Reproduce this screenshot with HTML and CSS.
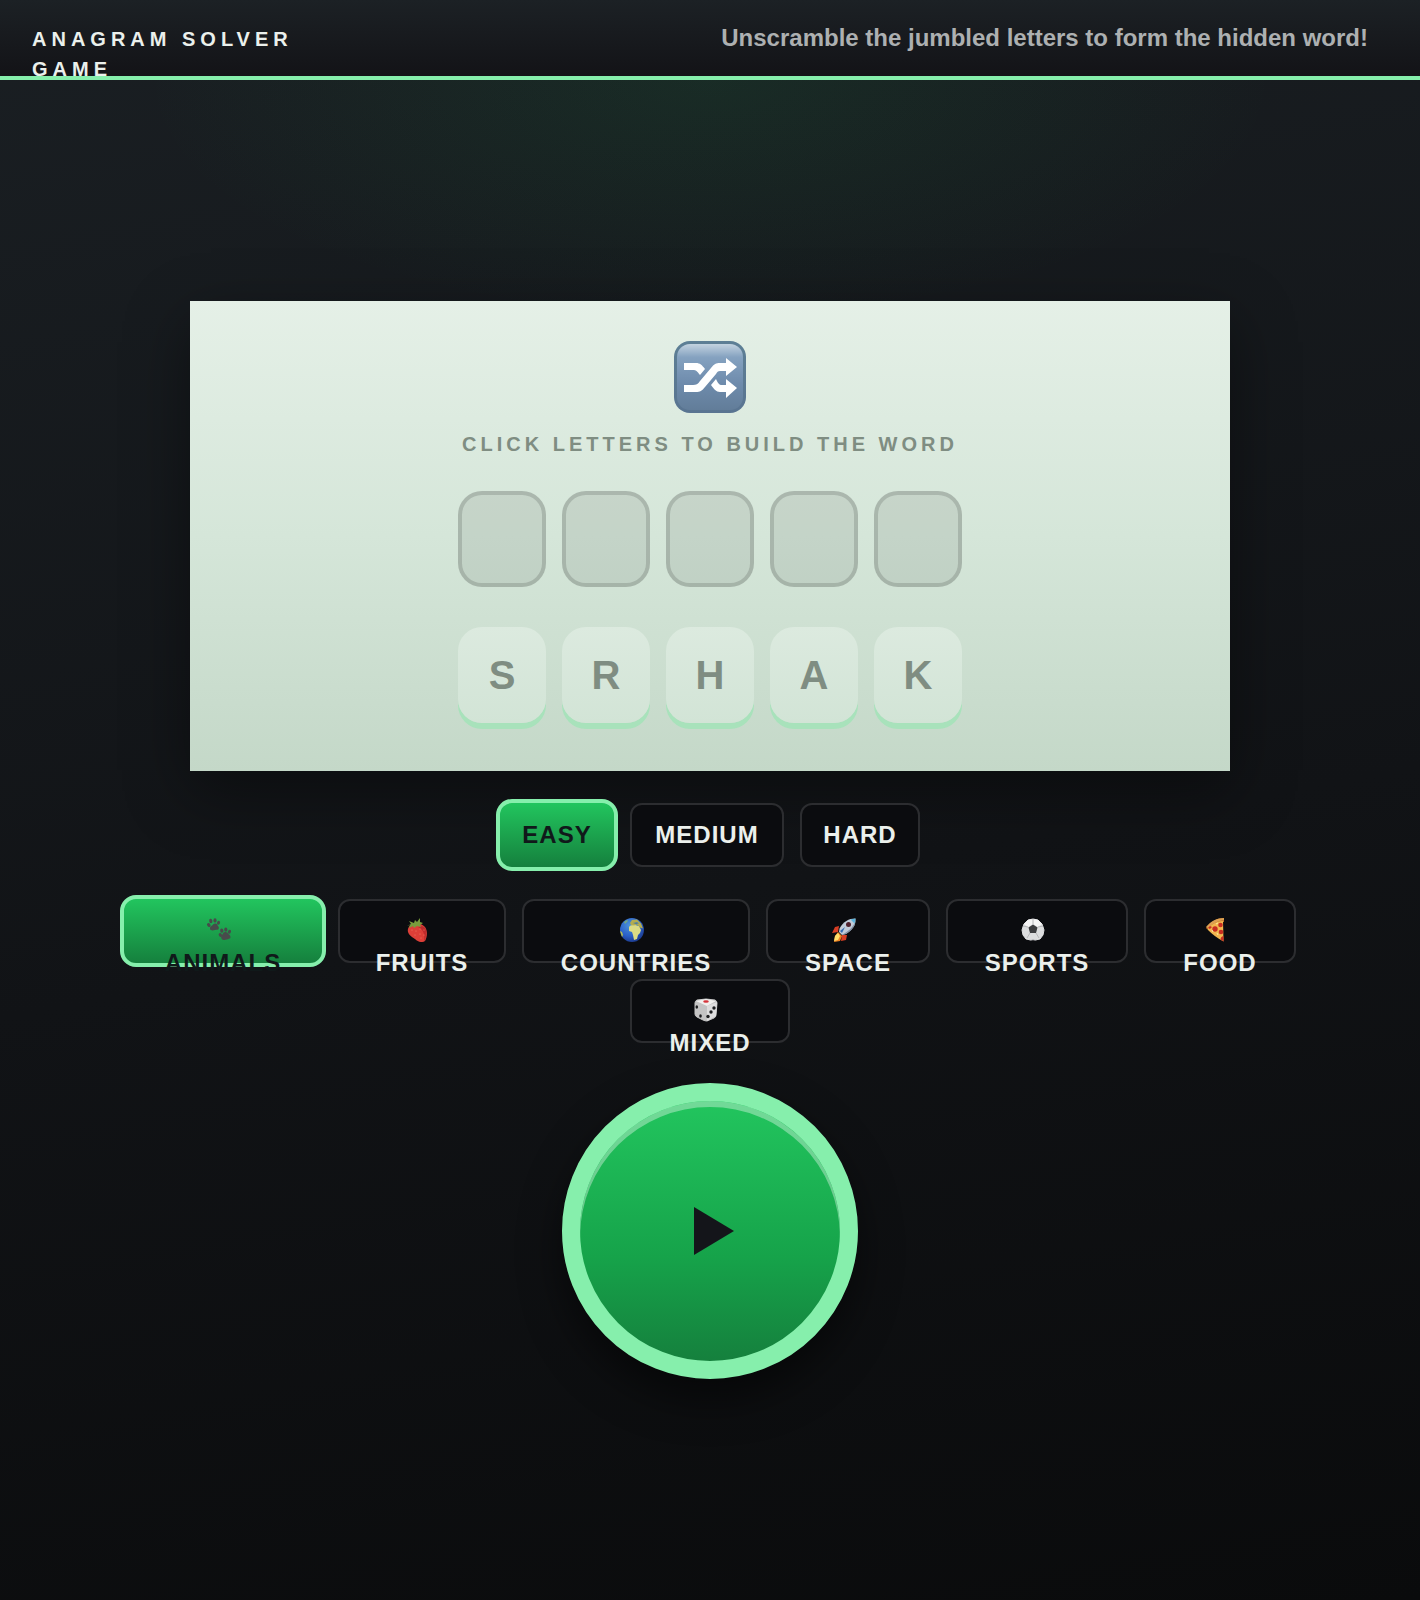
FILE: index.html
```html
<!DOCTYPE html>
<html lang="en">
<head>
    <meta charset="UTF-8">
    <meta name="viewport" content="width=device-width, initial-scale=1.0">
    <title>Anagram Solver Game</title>
    <link rel="stylesheet" href="styles.css">
</head>
<body>
    <header class="topbar">
        <h1 class="title">Anagram Solver Game</h1>
        <p class="tagline">Unscramble the jumbled letters to form the hidden word!</p>
    </header>

    <main class="game">
        <section class="board">
            <svg class="board-icon" viewBox="0 0 72 72" aria-hidden="true">
                <defs>
                    <linearGradient id="shuffle-edge" x1="0" y1="0" x2="0" y2="1">
                        <stop offset="0" stop-color="#5d7f95"/>
                        <stop offset="1" stop-color="#597491"/>
                    </linearGradient>
                    <linearGradient id="shuffle-bg" x1="0" y1="0" x2="0" y2="1">
                        <stop offset="0" stop-color="#c3d3e0"/>
                        <stop offset="0.2" stop-color="#85a2c0"/>
                        <stop offset="0.6" stop-color="#6e8bac"/>
                        <stop offset="1" stop-color="#627d99"/>
                    </linearGradient>
                </defs>
                <rect width="72" height="72" rx="16" fill="url(#shuffle-edge)"/>
                <rect x="3" y="3" width="66" height="66" rx="13" fill="url(#shuffle-bg)"/>
                <path d="M10 22h12c4 0 6 2 9 6l-5 6c-3-4-4-5-7-5h-9z" fill="#fff"/>
                <path d="M10 44h9c3 0 5-1 7-4l11-13c3-4 5-5 9-5h6v-5l11 9-11 9v-5h-6c-2 0-3 1-4 3L31 46c-3 4-5 5-9 5H10z" fill="#fff"/>
                <path d="M37 44l5-6c2 4 3 6 6 6h4v-6l11 9-11 10v-6h-6c-4 0-6-3-9-7z" fill="#fff"/>
            </svg>
            <p class="hint">Click letters to build the word</p>
            <div class="slots">
                <span class="slot"></span>
                <span class="slot"></span>
                <span class="slot"></span>
                <span class="slot"></span>
                <span class="slot"></span>
            </div>
            <div class="tiles">
                <button type="button" class="tile">S</button>
                <button type="button" class="tile">R</button>
                <button type="button" class="tile">H</button>
                <button type="button" class="tile">A</button>
                <button type="button" class="tile">K</button>
            </div>
        </section>

        <div class="options">
            <button type="button" class="option easy active">Easy</button>
            <button type="button" class="option medium">Medium</button>
            <button type="button" class="option hard">Hard</button>
        </div>

        <div class="options">
            <button type="button" class="option animals active">
                <svg class="emoji" viewBox="0 0 24 24" aria-hidden="true">
                    <g fill="#484b4b">
                        <path d="M3 10.500c0-2.500 2-2.500 3-4s4-1.500 4.500.5c.3 1.500 1.800 1.500 1.300 3.500-.5 1.700-2.300 1-3.800 1.500S3 13 3 10.500z"/>
                        <ellipse cx="1.800" cy="7" rx="1.600" ry="2.100" transform="rotate(-30 1.800 7)"/>
                        <ellipse cx="3.800" cy="3" rx="1.600" ry="2.200" transform="rotate(-12 3.800 3)"/>
                        <ellipse cx="8" cy="2.400" rx="1.600" ry="2.200"/>
                        <ellipse cx="11.500" cy="4.800" rx="1.500" ry="2" transform="rotate(25 11.500 4.800)"/>
                        <path d="M14.500 20.500c-1-2.500 1-3.500 1.500-5s3.500-2 4.500-.5 3 2 3 4-2.500 2-4 2.600-4 1-5-1.100z"/>
                        <ellipse cx="13.400" cy="17" rx="1.600" ry="2.100" transform="rotate(-30 13.400 17)"/>
                        <ellipse cx="14.800" cy="12.600" rx="1.600" ry="2.200" transform="rotate(-10 14.800 12.600)"/>
                        <ellipse cx="18.800" cy="11.600" rx="1.600" ry="2.200"/>
                        <ellipse cx="22.400" cy="13.800" rx="1.500" ry="2" transform="rotate(25 22.400 13.800)"/>
                    </g>
                </svg>
                <span>Animals</span>
            </button>
            <button type="button" class="option fruits">
                <svg class="emoji" viewBox="0 0 24 24" aria-hidden="true">
                    <path d="M2 11c1-6 12-8 17-2 3 4 2 11 0 14-3 2-7 1-10-2-5-3-8-6-7-10z" fill="#dc3f38"/>
                    <path d="M12 9c4-2 8 0 8 4s0 9-2 10c1-6 0-11-6-14z" fill="#bf2b2c"/>
                    <g fill="#f08a6c">
                        <circle cx="6" cy="12" r=".5"/><circle cx="10" cy="13" r=".5"/><circle cx="14" cy="11" r=".5"/><circle cx="18" cy="12" r=".5"/>
                        <circle cx="9" cy="17" r=".5"/><circle cx="14" cy="16" r=".5"/><circle cx="18" cy="17" r=".5"/><circle cx="15" cy="20" r=".5"/>
                    </g>
                    <path d="M1 8l4-2-2-3 5 2 1-3 2 2 3-4v4l3 1-3 2 1 2-4-1-3 2-1-2-4 2 1-3z" fill="#789c3c"/>
                </svg>
                <span>Fruits</span>
            </button>
            <button type="button" class="option countries">
                <svg class="emoji" viewBox="0 0 24 24" aria-hidden="true">
                    <defs>
                        <radialGradient id="ocean" cx=".4" cy=".3" r=".75">
                            <stop offset="0" stop-color="#4c93d8"/>
                            <stop offset="0.6" stop-color="#2a5fc9"/>
                            <stop offset="1" stop-color="#1a3685"/>
                        </radialGradient>
                    </defs>
                    <circle cx="12" cy="12" r="12" fill="url(#ocean)"/>
                    <path d="M9 9c1-2 4-2 6-2l4 1 2 4-1 3-2 2-1 4-3 1-1-5-1-3-3-1z" fill="#dbdc84"/>
                    <path d="M10 5l2-3 5-.5 4 4 2 5-3-1-3-3-3 1-3-.5z" fill="#b3ad50"/>
                    <path d="M4 4l3-2 1 1-3 3z" fill="#75a981"/>
                    <path d="M0 13l2 1 1 3-1 2z" fill="#b6bd4e"/>
                    <path d="M13 5l4-.8 2 1-3 .8z" fill="#3f79aa"/>
                </svg>
                <span>Countries</span>
            </button>
            <button type="button" class="option space">
                <svg class="emoji" viewBox="0 0 24 24" aria-hidden="true">
                    <path d="M7 8l-4 1-3 6 6-1zM15 17l-1 5-5 1 1-6z" fill="#d73e24"/>
                    <path d="M6 14l4 4-2 5-6 1 1-6z" fill="#f08223"/>
                    <path d="M6 15l2 3-2 4-4 1 1-5z" fill="#ffdf68"/>
                    <path d="M23.500.5c-7 0-12 3-16 10L7 14l3 3 4-1c6-4 10-8 9.500-15.500z" fill="#c0cbd8"/>
                    <path d="M23.500.5c0 7-6 12-13.500 16.500L14 16c6-4 10-8 9.500-15.500z" fill="#8290a3"/>
                    <path d="M23.500.5l-5 1 4 4z" fill="#5cb6de"/>
                    <circle cx="16.500" cy="6.500" r="2.500" fill="#50212d"/>
                    <path d="M8 13l5-4-3 6z" fill="#346bb1"/>
                </svg>
                <span>Space</span>
            </button>
            <button type="button" class="option sports">
                <svg class="emoji" viewBox="0 0 24 24" aria-hidden="true">
                    <circle cx="12" cy="12" r="11" fill="#3e3f42"/>
                    <path d="M7 2l5-1 5 1 4 4 2 6-1 5-3 4-5 1-2-1-2 1-5-1-3-4-1-5 2-6z" fill="#dcddde" stroke="#dcddde" stroke-linejoin="round"/>
                    <path d="M7 2l5-1 5 1 4 4-4 3-5-3-5 3-4-3z" fill="#f5f5f5"/>
                    <path d="M12 6.500l4.500 3-1.500 5.500H9L7.500 9.500z" fill="#3c3d3f"/>
                    <path d="M12 6V1M17 9l5-1M15 15l3 5M9 15l-3 5M7 9L2 8" stroke="#b7b8ba"/>
                </svg>
                <span>Sports</span>
            </button>
            <button type="button" class="option food">
                <svg class="emoji" viewBox="0 0 24 24" aria-hidden="true">
                    <path d="M2 10C6 4 13 0 20 0v4C13 4 8 7 4 12z" fill="#bd7229"/>
                    <path d="M4 10c4-4 9-7 15-7l.5 20.500C13 20 8 16 4 12z" fill="#f2b64e"/>
                    <path d="M2 9C7 3 13 0 20 0v2C13 3 8 6 4 10z" fill="#dda052"/>
                    <g fill="#c92e22">
                        <circle cx="11" cy="11" r="2.700"/>
                        <circle cx="16.500" cy="7" r="2.300"/>
                        <circle cx="17" cy="14" r="2.300"/>
                        <path d="M19.500 18v5.500l-3-2c0-2 1-3 3-3.500zM6 8l2 1-2 2-2-1z"/>
                    </g>
                    <path d="M12 6l2-1M13 15l1 2M8 12l1 2" stroke="#ffeaa0"/>
                </svg>
                <span>Food</span>
            </button>
            <button type="button" class="option mixed">
                <svg class="emoji" viewBox="0 0 24 24" aria-hidden="true">
                    <path d="M3 2l9-1 9 1q2 1 2 3l-1 12q0 2-2 3l-7 3q-2 0-4-1l-6-3q-2-1-2-3V5q0-2 2-3z" fill="#c4c4c4" stroke="#c4c4c4"/>
                    <path d="M2 3l10-2 10 2-9 5z" fill="#f1f0ee"/>
                    <path d="M13 8l10-4-1 14-9 5z" fill="#dedede"/>
                    <ellipse cx="12" cy="3.500" rx="2.800" ry="1.200" fill="#d5343b"/>
                    <g fill="#1d1e20">
                        <ellipse cx="2.800" cy="9" rx="1.300" ry="1.800"/>
                        <ellipse cx="6.500" cy="18" rx="1.300" ry="1.800"/>
                        <circle cx="20" cy="10" r="1.700"/>
                        <circle cx="17" cy="14" r="1.700"/>
                        <circle cx="14" cy="18.500" r="1.700"/>
                    </g>
                </svg>
                <span>Mixed</span>
            </button>
        </div>

        <button type="button" class="play" aria-label="Play"></button>
    </main>
</body>
</html>
```
FILE: styles.css
```css
* {
	box-sizing: border-box;
}

body {
	font-family: "Liberation Sans", Arial, sans-serif;
	font-weight: bold;
	margin: 0;
	min-height: 100vh;
	display: flex;
	flex-direction: column;
	color: #ebf0ec;
	background: radial-gradient(ellipse 40% 240px at 50% 80px, rgba(34, 197, 94, 0.09), transparent),
		linear-gradient(170deg, #1a1f23 0%, #111316 55%, #0a0b0c 100%);
}

h1, p {
	margin: 0;
}

button {
	font: inherit;
	color: inherit;
	cursor: pointer;
}

.topbar {
	display: flex;
	justify-content: space-between;
	align-items: flex-start;
	height: 80px;
	padding: 24px 52px 0 32px;
	border-bottom: 4px solid #86efac;
	background: linear-gradient(180deg, #1c2125, #131317);
}

.title {
	width: 280px;
	font-size: 20px;
	line-height: 30px;
	letter-spacing: 5px;
	text-transform: uppercase;
}

.tagline {
	font-size: 24px;
	line-height: 28px;
	color: #adb0b1;
}

.game {
	flex: 1;
	display: flex;
	flex-direction: column;
	align-items: center;
	justify-content: center;
	gap: 32px;
	padding: 0 32px;
}

/* Board */
.board {
	display: flex;
	flex-direction: column;
	align-items: center;
	width: 100%;
	max-width: 1040px;
	padding: 40px 40px 48px;
	color: #7f8d82;
	background: linear-gradient(180deg, #e5f0e7 0%, #d5e6d9 50%, #c4d8c8 100%);
	box-shadow: 0 20px 60px rgba(0, 0, 0, 0.4);
}

.board-icon {
	width: 72px;
	height: 72px;
}

.hint {
	margin: 16px 0 32px;
	font-size: 20px;
	line-height: 30px;
	letter-spacing: 4px;
	text-transform: uppercase;
}

.slots,
.tiles {
	display: flex;
	gap: 16px;
}

.slots {
	margin-bottom: 40px;
}

.slot,
.tile {
	width: 88px;
	height: 96px;
	border-radius: 24px;
}

.slot {
	border: 4px solid rgba(0, 0, 0, 0.14);
	background: rgba(0, 0, 0, 0.08);
}

.tile {
	padding: 0;
	border: 0;
	font-size: 40px;
	background: linear-gradient(180deg, #dceadf, #d2e4d6);
	box-shadow: 0 6px 0 #a8e2bb;
}

/* Difficulty and category buttons */
.options {
	display: flex;
	flex-wrap: wrap;
	justify-content: center;
	gap: 16px;
	max-width: 1240px;
}

.option {
	display: flex;
	flex-direction: column;
	align-items: center;
	justify-content: flex-start;
	height: 64px;
	padding: 14px 0;
	border: 2px solid #2c2d30;
	border-radius: 12px;
	background: #0b0c0f;
	font-size: 24px;
	line-height: 32px;
	letter-spacing: 1px;
	text-transform: uppercase;
}

/* The thick border grows outwards, so the row keeps its place */
.option.active {
	box-sizing: content-box;
	height: 32px;
	margin: -4px;
	padding: 16px 0;
	border: 4px solid #86efac;
	border-radius: 16px;
	color: #10191a;
	background: linear-gradient(180deg, #22c55e, #15803d);
}

.easy { width: 114px; }
.medium { width: 154px; }
.hard { width: 120px; }
.animals { width: 198px; }
.fruits { width: 168px; }
.countries { width: 228px; }
.space { width: 164px; }
.sports { width: 182px; }
.food { width: 152px; }
.mixed { width: 160px; }

.emoji {
	flex: none;
	width: 24px;
	height: 24px;
	margin: 3px 8px 5px 0;
}

/* Play button */
.play {
	display: flex;
	align-items: center;
	justify-content: center;
	width: 296px;
	height: 296px;
	margin: 8px 0 0;
	padding: 0;
	border: 18px solid #86efac;
	border-radius: 50%;
	background: linear-gradient(180deg, #22c55e 0%, #16a34a 60%, #15803d 100%);
	box-shadow: inset 0 6px 0 rgba(255, 255, 255, 0.36), 0 20px 40px rgba(0, 0, 0, 0.5);
}

.play::before {
	content: "";
	margin-left: 8px;
	border-style: solid;
	border-width: 24px 0 24px 40px;
	border-color: transparent transparent transparent #14151a;
}

@media (max-width: 768px) {
	.tagline {
		display: none;
	}

	.board {
		padding: 24px 16px 32px;
	}

	.slots,
	.tiles {
		gap: 8px;
	}

	.slot,
	.tile {
		width: 56px;
		height: 64px;
		border-radius: 16px;
	}
}
```
